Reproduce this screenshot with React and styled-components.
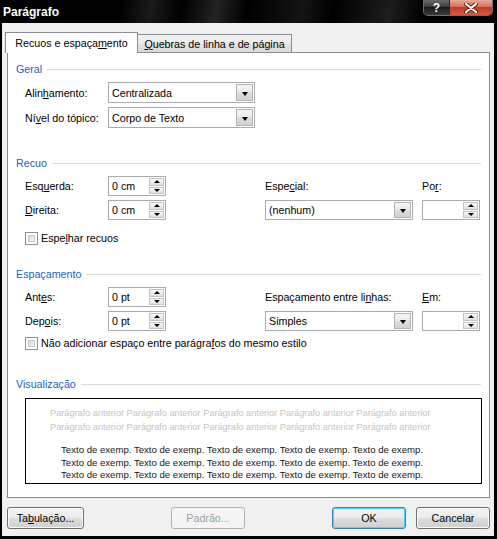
import React from "react";
import styled, { createGlobalStyle } from "styled-components";

const GlobalStyle = createGlobalStyle`
  html, body {
    margin: 0;
    padding: 0;
    background: #000;
  }
  body {
    font-family: "Liberation Sans", Arial, sans-serif;
    font-size: 10.7px;
    color: #000;
  }
`;

const Window = styled.div`
  width: 497px;
  height: 539px;
  box-sizing: border-box;
  display: flex;
  flex-direction: column;
  padding: 0 3px 3px 2px;
  background: #000;
`;

const TitleBar = styled.div`
  flex: none;
  height: 23px;
  margin: 0 -3px 0 -2px;
  padding: 0 4px 0 3px;
  display: flex;
  align-items: flex-start;
  background: linear-gradient(
    100deg,
    #000 0px,
    #000 120px,
    #1b1b1b 150px,
    #000 180px,
    #232323 215px,
    #000 245px,
    #141414 300px,
    #000 330px,
    #1d1d1d 385px,
    #000 420px
  );
`;

const Title = styled.div`
  align-self: center;
  color: #fff;
  font-weight: bold;
  font-size: 12px;
`;

const CaptionGroup = styled.div`
  margin-left: auto;
  display: flex;
  border: 1px solid #6d6d6d;
  border-top: none;
  border-radius: 0 0 5px 5px;
  overflow: hidden;
`;

const HelpButton = styled.div`
  width: 25px;
  height: 15px;
  display: flex;
  align-items: center;
  justify-content: center;
  color: #fff;
  font-weight: bold;
  font-size: 12px;
  border-right: 1px solid #2a2a2a;
  background: linear-gradient(#6a6a6a 0%, #3c3c3c 45%, #1c1c1c 50%, #3a3a3a 100%);
`;

const CloseButton = styled.div`
  width: 42px;
  height: 15px;
  display: flex;
  align-items: center;
  justify-content: center;
  background: linear-gradient(#e9a899 0%, #d8705d 45%, #c23a28 50%, #d6583f 100%);
`;

const Body = styled.div`
  flex: 1;
  display: flex;
  flex-direction: column;
  background: #f0f0f0;
  padding: 9px 4px 7px 5px;
`;

const TabStrip = styled.div`
  flex: none;
  height: 20px;
  display: flex;
  align-items: flex-end;
  position: relative;
  z-index: 1;
`;

const Tab = styled.div`
  box-sizing: border-box;
  position: relative;
  z-index: ${(p) => (p.$active ? 2 : 1)};
  width: ${(p) => p.$width}px;
  height: ${(p) => (p.$active ? 21 : 18)}px;
  margin-bottom: ${(p) => (p.$active ? -1 : 0)}px;
  margin-left: ${(p) => (p.$active ? -2 : -1)}px;
  border: 1px solid #898c95;
  border-bottom: none;
  background: ${(p) =>
    p.$active
      ? "#fff"
      : "linear-gradient(#f3f3f3 0%, #ebebeb 50%, #e2e2e2 50%, #dadada 100%)"};
  display: flex;
  align-items: center;
  justify-content: center;
  padding-bottom: ${(p) => (p.$active ? 1 : 0)}px;
  white-space: nowrap;
`;

const Panel = styled.div`
  flex: 1;
  display: flex;
  flex-direction: column;
  background: #fff;
  border: 1px solid #898c95;
  padding: 9px 8px 0 8px;
`;

const SectionHead = styled.div`
  margin-top: ${(p) => p.$mt || 0}px;
  height: 14px;
  display: flex;
  align-items: center;
  gap: 5px;
  color: #1a5fc4;

  &::after {
    content: "";
    flex: 1;
    height: 1px;
    background: #d5d8dc;
  }
`;

const FieldGrid = styled.div`
  margin: 6px 0 0 9px;
  display: grid;
  grid-template-columns: ${(p) => p.$cols};
  grid-template-rows: ${(p) => p.$rowH}px ${(p) => p.$rowH}px;
  row-gap: 4px;
`;

const Label = styled.div`
  display: flex;
  align-items: center;
  white-space: nowrap;
  grid-column: ${(p) => p.$col || "auto"};
  grid-row: ${(p) => p.$row || "auto"};
`;

const Key = styled.span`
  text-decoration: underline;
`;

const SelectBox = styled.div`
  box-sizing: border-box;
  width: ${(p) => p.$w}px;
  height: 100%;
  border: 1px solid #a9abb0;
  background: #fff;
  display: flex;
  align-items: stretch;
  grid-column: ${(p) => p.$col || "auto"};
  grid-row: ${(p) => p.$row || "auto"};
`;

const SelectText = styled.div`
  flex: 1;
  display: flex;
  align-items: center;
  padding-left: 3px;
  white-space: nowrap;
`;

const SelectArrow = styled.div`
  width: 15px;
  margin: 1px;
  border: 1px solid #b4b4b4;
  background: linear-gradient(#f4f4f4 0%, #ebebeb 50%, #dcdcdc 50%, #d2d2d2 100%);
  display: flex;
  align-items: center;
  justify-content: center;

  &::after {
    content: "";
    margin-top: 2px;
    border-left: 3.5px solid transparent;
    border-right: 3.5px solid transparent;
    border-top: 4px solid #000;
  }
`;

const SpinBox = styled.div`
  box-sizing: border-box;
  width: 58px;
  height: 100%;
  border: 1px solid #a9abb0;
  background: #fff;
  display: flex;
  grid-column: ${(p) => p.$col || "auto"};
  grid-row: ${(p) => p.$row || "auto"};
`;

const SpinText = styled.div`
  flex: 1;
  display: flex;
  align-items: center;
  padding-left: 3px;
  white-space: nowrap;
`;

const SpinButtons = styled.div`
  width: 15px;
  margin: 1px 1px 1px 0;
  display: flex;
  flex-direction: column;
  gap: 1px;
`;

const SpinButton = styled.div`
  flex: 1;
  border: 1px solid #c4c4c4;
  background: linear-gradient(#f7f7f7 0%, #ececec 50%, #dfdfdf 100%);
  display: flex;
  align-items: center;
  justify-content: center;

  &::after {
    content: "";
    border-left: 3px solid transparent;
    border-right: 3px solid transparent;
    ${(p) =>
      p.$down ? "border-top: 3px solid #000;" : "border-bottom: 3px solid #000;"}
  }
`;

const CheckRow = styled.div`
  margin: ${(p) => p.$mt}px 0 0 9px;
  height: 14px;
  display: flex;
  align-items: center;
  gap: 3px;
  white-space: nowrap;
`;

const CheckBox = styled.div`
  box-sizing: border-box;
  width: 13px;
  height: 13px;
  border: 1px solid #8e8f8f;
  background: #fff;
  padding: 2px;

  &::after {
    content: "";
    display: block;
    width: 100%;
    height: 100%;
    box-sizing: border-box;
    border: 1px solid #c5c8cc;
    background: linear-gradient(135deg, #d6d8db 0%, #f4f4f4 100%);
  }
`;

const Preview = styled.div`
  margin: 7px 0 0 9px;
  width: 457px;
  height: 86px;
  box-sizing: border-box;
  border: 1px solid #000;
  background: #fff;
  overflow: hidden;
  padding: 7px 47px 0 24px;
  font-family: "Liberation Sans", Arial, sans-serif;
`;

const PrevLine = styled.div`
  color: #c4c4c4;
  font-size: 9.2px;
  line-height: 14px;
  white-space: nowrap;
`;

const SampleBlock = styled.div`
  margin-top: 10px;
`;

const SampleLine = styled.div`
  color: #161616;
  font-size: 9.6px;
  line-height: 12.5px;
  text-align: center;
  white-space: nowrap;
`;

const Footer = styled.div`
  flex: none;
  height: 22px;
  margin-top: 9px;
  display: flex;
  align-items: stretch;
`;

const Spacer = styled.div`
  flex: 1;
`;

const Button = styled.div`
  box-sizing: border-box;
  width: ${(p) => p.$w || 74}px;
  margin-left: ${(p) => p.$ml || 0}px;
  display: flex;
  align-items: center;
  justify-content: center;
  border-radius: 3px;
  border: 1px solid
    ${(p) => (p.$disabled ? "#adb2b5" : p.$default ? "#3c7fb1" : "#707070")};
  color: ${(p) => (p.$disabled ? "#a0a0a0" : "#000")};
  background: ${(p) =>
    p.$disabled
      ? "#f4f4f4"
      : "linear-gradient(#f2f2f2 0%, #ebebeb 50%, #dddddd 50%, #cfcfcf 100%)"};
  box-shadow: ${(p) =>
    p.$disabled
      ? "none"
      : p.$default
      ? "inset 0 0 0 1px #48d7fa"
      : "inset 0 0 0 1px #fcfcfc"};
`;

const prev = Array(5).fill("Parágrafo anterior").join(" ");
const sample = Array(5).fill("Texto de exemp.").join(" ");

const Select = ({ w, col, row, children }) => (
  <SelectBox $w={w} $col={col} $row={row}>
    <SelectText>{children}</SelectText>
    <SelectArrow />
  </SelectBox>
);

const Spinner = ({ col, row, children }) => (
  <SpinBox $col={col} $row={row}>
    <SpinText>{children}</SpinText>
    <SpinButtons>
      <SpinButton />
      <SpinButton $down />
    </SpinButtons>
  </SpinBox>
);

const App = () => {
  return (
    <>
      <GlobalStyle />
      <Window>
        <TitleBar>
          <Title>Parágrafo</Title>
          <CaptionGroup>
            <HelpButton>?</HelpButton>
            <CloseButton>
              <svg width="14" height="10" viewBox="0 0 14 10">
                <path
                  d="M2 1 L12 9 M12 1 L2 9"
                  stroke="#5a1a12"
                  strokeWidth="4"
                  strokeLinecap="round"
                />
                <path
                  d="M2 1 L12 9 M12 1 L2 9"
                  stroke="#fff"
                  strokeWidth="2.2"
                  strokeLinecap="round"
                />
              </svg>
            </CloseButton>
          </CaptionGroup>
        </TitleBar>

        <Body>
          <TabStrip>
            <Tab $active $width={133}>
              Recuos e espaça<Key>m</Key>ento
            </Tab>
            <Tab $width={155}>
              <Key>Q</Key>uebras de linha e de página
            </Tab>
          </TabStrip>

          <Panel>
            <SectionHead>Geral</SectionHead>
            <FieldGrid $cols="83px 147px" $rowH={21}>
              <Label>
                Alin<Key>h</Key>amento:
              </Label>
              <Select w={147}>Centralizada</Select>
              <Label>
                Ní<Key>v</Key>el do tópico:
              </Label>
              <Select w={147}>Corpo de Texto</Select>
            </FieldGrid>

            <SectionHead $mt={28}>Recuo</SectionHead>
            <FieldGrid $cols="83px 157px 157px 58px" $rowH={20}>
              <Label $col={1} $row={1}>
                Esq<Key>u</Key>erda:
              </Label>
              <Spinner col={2} row={1}>0 cm</Spinner>
              <Label $col={3} $row={1}>
                Espe<Key>c</Key>ial:
              </Label>
              <Label $col={4} $row={1}>
                Po<Key>r</Key>:
              </Label>
              <Label $col={1} $row={2}>
                <Key>D</Key>ireita:
              </Label>
              <Spinner col={2} row={2}>0 cm</Spinner>
              <Select w={148} col={3} row={2}>
                (nenhum)
              </Select>
              <Spinner col={4} row={2} />
            </FieldGrid>
            <CheckRow $mt={11}>
              <CheckBox />
              <span>
                Espe<Key>l</Key>har recuos
              </span>
            </CheckRow>

            <SectionHead $mt={22}>Espaçamento</SectionHead>
            <FieldGrid $cols="83px 157px 157px 58px" $rowH={20}>
              <Label $col={1} $row={1}>
                Ant<Key>e</Key>s:
              </Label>
              <Spinner col={2} row={1}>0 pt</Spinner>
              <Label $col={3} $row={1}>
                Espaçamento entre li<Key>n</Key>has:
              </Label>
              <Label $col={4} $row={1}>
                <Key>E</Key>m:
              </Label>
              <Label $col={1} $row={2}>
                Dep<Key>o</Key>is:
              </Label>
              <Spinner col={2} row={2}>0 pt</Spinner>
              <Select w={148} col={3} row={2}>
                Simples
              </Select>
              <Spinner col={4} row={2} />
            </FieldGrid>
            <CheckRow $mt={5}>
              <CheckBox />
              <span>
                Não adicionar espaço entre parágra<Key>f</Key>os do mesmo
                estilo
              </span>
            </CheckRow>

            <SectionHead $mt={27}>Visualização</SectionHead>
            <Preview>
              <PrevLine>{prev}</PrevLine>
              <PrevLine>{prev}</PrevLine>
              <SampleBlock>
                <SampleLine>{sample}</SampleLine>
                <SampleLine>{sample}</SampleLine>
                <SampleLine>{sample}</SampleLine>
              </SampleBlock>
            </Preview>
          </Panel>

          <Footer>
            <Button $w={77}>
              Ta<Key>b</Key>ulação...
            </Button>
            <Spacer />
            <Button $disabled>Padrão...</Button>
            <Spacer />
            <Button $default>OK</Button>
            <Button $ml={10}>Cancelar</Button>
          </Footer>
        </Body>
      </Window>
    </>
  );
};

export default App;
